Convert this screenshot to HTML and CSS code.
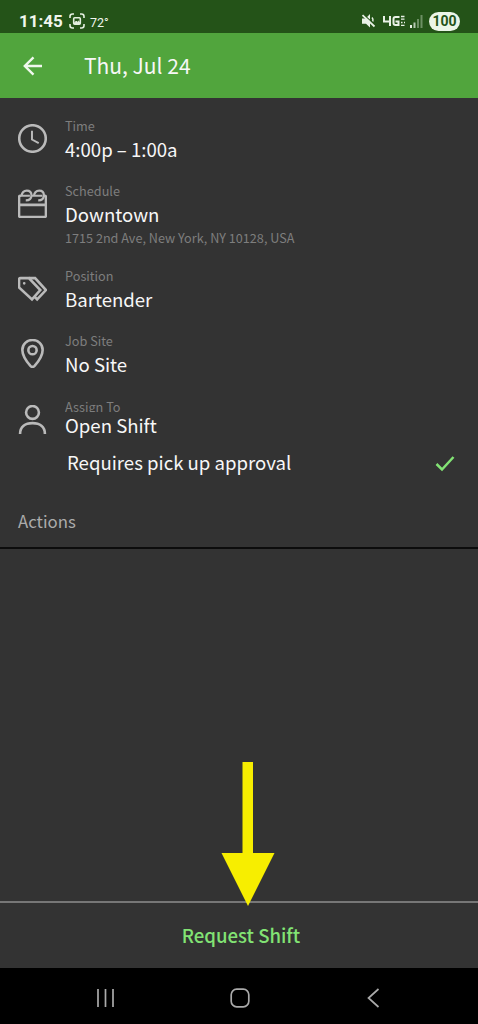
FILE: index.html
```html
<!DOCTYPE html>
<html lang="en">
<head>
<meta charset="utf-8">
<title>Shift Details</title>
<link rel="stylesheet" href="styles.css">
</head>
<body>
<div class="screen">
  <div class="status">
    <span class="clock">11:45</span>
    <svg class="shot" width="16" height="16" viewBox="0 0 16 16" fill="none" stroke="#e4efe0" stroke-width="1.600"><path d="M1 5V3.500Q1 1 3.500 1H5M11 1h1.500Q15 1 15 3.500V5M15 11v1.500Q15 15 12.500 15H11M5 15H3.500Q1 15 1 12.500V11"/><rect x="4.700" y="4.700" width="6.600" height="6.600" rx="1"/><path d="M5 10.500l2-2.300 1.300 1 1.200-1.200 1.500 2.500z" fill="#e4efe0" stroke-width="1"/></svg>
    <span class="temp">72°</span>
    <span class="grow"></span>
    <svg class="mute" width="15" height="16" viewBox="0 0 15 16"><path d="M1 5.500h3.500L9 1v13.500L5 10.700H1z" fill="#e9f2e6"/><path d="M11 4.500Q12.500 6 11.800 8.500" stroke="#e9f2e6" stroke-width="1.500" fill="none"/><path d="M2.500 1.500L14.500 12.500" stroke="#245318" stroke-width="1.200"/><path d="M1.500 2.200L13.500 13.500" stroke="#e9f2e6" stroke-width="1.800"/></svg>
    <svg class="net" width="24" height="12" viewBox="0 0 24 12" fill="none" stroke="#e9f2e6" stroke-width="2"><path d="M2 1v5.500h7M8 1v10M17.500 2h-4q-2 0-2 2v4q0 2 2 2h3V6.500h-3"/><path d="M19 1.500h3.500M19 4.200h3.500M19 7.500h1.500M22 7.500h1M19 10.300h3.500" stroke-width="1.300"/></svg>
    <svg class="signal" width="13" height="13" viewBox="0 0 13 13"><path d="M0 10h2v3H0z" fill="#e9f2e6"/><path d="M3.500 7.500h2V13h-2z" fill="#b5c8b0"/><path d="M7 4h2v9H7zM10.500 0h2v13h-2z" fill="#6c8f63"/></svg>
    <span class="battery">100</span>
  </div>
  <div class="appbar">
    <svg width="20" height="20" viewBox="0 0 20 20" fill="none" stroke="#f0f8ed" stroke-width="2.400"><path d="M19 10H2M10.500 1.300L1.800 10l8.700 8.700"/></svg>
    <span class="title">Thu, Jul 24</span>
  </div>
  <div class="details">
    <div class="row">
      <svg class="icon" viewBox="0 0 28 28"><circle cx="14" cy="14" r="12.800"/><path d="M13.500 6.500V15l6.500 3.500" stroke-width="1.900"/></svg>
      <div class="text"><div class="label">Time</div><div class="value">4:00p – 1:00a</div></div>
    </div>
    <div class="row">
      <svg class="icon" viewBox="0 0 28 28"><path d="M3.500 6.500H2.500Q1 6.500 1 8V25.500Q1 27 2.500 27H25.500Q27 27 27 25.500V8Q27 6.500 25.500 6.500H25M1 15.300H27"/><path d="M3.200 7Q4 1.500 8.500 1.500Q13 1.500 13 6Q13 11 7.500 11M15.200 7Q16 1.500 20.500 1.500Q25 1.500 25 6Q25 11 19.500 11M3.200 6.500H11.500M13.500 6.500H23.500" stroke-width="2.100"/></svg>
      <div class="text"><div class="label">Schedule</div><div class="value">Downtown</div><div class="address">1715 2nd Ave, New York, NY 10128, USA</div></div>
    </div>
    <div class="row">
      <svg class="icon" viewBox="0 0 28 28"><path d="M2.500 4H10.500L21.500 15.500L13.500 24.500L1 13V5.500Q1 4 2.500 4Z"/><path d="M10.500 4H16.500L27 15.500L18.500 24.500L16 22" /><circle cx="6" cy="9" r=".7" stroke-width="1.200"/></svg>
      <div class="text"><div class="label">Position</div><div class="value">Bartender</div></div>
    </div>
    <div class="row">
      <svg class="icon" viewBox="0 0 28 28"><path d="M14 1C8.500 1 4.200 5.200 4.200 10.500C4.200 16 9 22.500 12 26Q14 28 16 26C19 22.500 23.800 16 23.800 10.500C23.800 5.200 19.500 1 14 1Z"/><circle cx="14" cy="10.800" r="4"/></svg>
      <div class="text"><div class="label">Job Site</div><div class="value">No Site</div></div>
    </div>
    <div class="row assign">
      <svg class="icon" viewBox="0 0 28 28"><circle cx="14" cy="7.200" r="6.200"/><path d="M2 28C2 21 7 17.500 14 17.500S26 21 26 28"/></svg>
      <div class="text"><div class="label">Assign To</div><div class="value">Open Shift</div></div>
    </div>
    <div class="approval">
      <span class="value">Requires pick up approval</span>
      <svg width="20" height="17" viewBox="0 0 20 17" fill="none" stroke="#82e374" stroke-width="2.500"><path d="M1.500 9L7 14.500L18.500 2"/></svg>
    </div>
  </div>
  <div class="actions">Actions</div>
  <div class="space">
    <svg class="pointer" width="54" height="144" viewBox="0 0 54 144"><path d="M21.500 0H32V91H53.500L27 144L0.500 91H21.500Z" fill="#f7ee00"/></svg>
  </div>
  <div class="request">Request Shift</div>
  <div class="nav">
    <svg width="20" height="20" viewBox="0 0 20 20"><path d="M2 1v18M9.500 1v18M17 1v18"/></svg>
    <svg width="20" height="20" viewBox="0 0 20 20"><rect x="1.200" y="1.200" width="17.600" height="17.600" rx="5.500"/></svg>
    <svg width="20" height="20" viewBox="0 0 20 20"><path d="M14.500 1L4.500 10l10 9"/></svg>
  </div>
</div>
</body>
</html>
```

FILE: styles.css
```css
* { box-sizing: border-box; }
body { margin: 0; background: #333; }
.screen {
  width: 478px; height: 1024px; display: flex; flex-direction: column; overflow: hidden;
  background: #333; color: #f7f7f7;
  font-family: "Noto Sans CJK JP", "Noto Sans", sans-serif;
  white-space: nowrap;
}
.status {
  flex: none; height: 33px; background: #245318; color: #f0f6ee;
  display: flex; align-items: center; padding: 9px 18px 0 19px;
  font-family: Roboto, sans-serif;
}
.clock { font-size: 17px; font-weight: 700; line-height: 24px; width: 50px; }
.temp { font-size: 12.500px; margin-left: 5px; position: relative; top: 1px; }
.grow { flex: 1; }
.net { margin-left: 6px; }
.signal { margin-left: 4px; }
.battery {
  margin-left: 6px; width: 31px; height: 19px; border-radius: 10px; background: #ebf5e8;
  color: #245318; font-size: 14px; line-height: 19px; font-weight: 700; text-align: center;
}
.appbar {
  flex: none; height: 65px; background: #51a53d;
  display: flex; align-items: center; padding-left: 23px;
}
.title { margin: -1px 0 0 41px; font-size: 21px; line-height: 30px; }
.details { padding: 19px 23px 0 18px; flex: none; }
.row { display: flex; gap: 18px; padding-bottom: 20.400px; }
.icon { width: 29px; height: 29px; margin-top: 7px; flex: none; fill: none; stroke: #bababa; stroke-width: 2.500; }
.label { font-size: 12.700px; line-height: 18px; color: #7e7e7e; }
.value { font-size: 18.600px; line-height: 27px; }
.address { font-size: 12.650px; line-height: 19px; color: #7e7e7e; margin-top: 1px; margin-bottom: -1px; }
.assign { padding-bottom: 0; }
.assign .label { height: 14px; overflow: hidden; }
.assign .value { line-height: 26px; }
.approval { display: flex; align-items: center; justify-content: space-between; height: 30px; margin-top: 9px; padding-left: 49px; }
.approval svg { margin-top: 3px; }
.actions {
  flex: none; height: 72px; padding: 30px 0 0 18px; font-size: 16.800px; line-height: 28px;
  color: #ababab; border-bottom: 2px solid #0c0c0c;
}
.space { flex: 1; display: flex; align-items: flex-end; padding-left: 221px; min-height: 0; }
.pointer { flex: none; margin-bottom: -5px; position: relative; }
.request {
  flex: none; height: 67px; border-top: 2px solid #777; color: #82e374;
  text-align: center; padding: 17px 0 0 4px; font-size: 18.600px; line-height: 30px; font-weight: 500;
}
.nav {
  flex: none; height: 56px; background: #000; display: flex; justify-content: space-between;
  align-items: center; padding: 3px 94px 0 96px;
}
.nav svg { fill: none; stroke: #aaa; stroke-width: 1.700; }
```
